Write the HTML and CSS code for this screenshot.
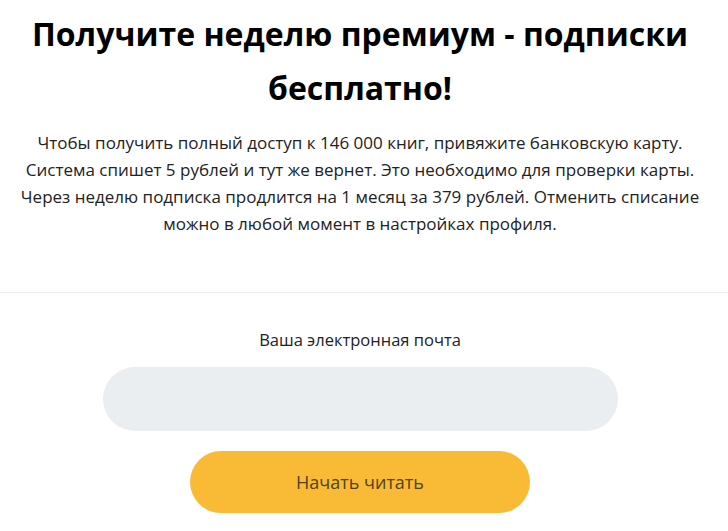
FILE: index.html
```html
<!DOCTYPE html>
<html lang="ru">
<head>
    <meta charset="UTF-8">
    <title>Премиум-подписка</title>
    <link rel="stylesheet" href="styles.css">
</head>
<body>
    <div class="page">
        <div class="promo">
            <h1>Получите неделю премиум - подписки бесплатно!</h1>
            <p class="promo-text">
                Чтобы получить полный доступ к 146 000 книг, привяжите банковскую карту.<br>
                Система спишет 5 рублей и тут же вернет. Это необходимо для проверки карты.<br>
                Через неделю подписка продлится на 1 месяц за 379 рублей. Отменить списание<br>
                можно в любой момент в настройках профиля.
            </p>
        </div>

        <hr class="divider">

        <form class="signup" onsubmit="return false;">
            <label for="email">Ваша электронная почта</label>
            <input type="email" id="email" class="email-input">
            <button type="submit" class="start-btn">Начать читать</button>
        </form>
    </div>
</body>
</html>
```

FILE: styles.css
```css
body {
    margin: 0;
    font-family: 'Open Sans', 'Noto Sans', sans-serif;
    background: #fff;
    color: #222;
}

.page {
    width: 720px;
}

.promo {
    padding: 7px 8px 0;
    text-align: center;
}

h1 {
    margin: 0 auto;
    max-width: 690px;
    font-size: 32px;
    line-height: 54px;
    font-weight: 700;
    color: #000;
}

.promo-text {
    margin: 14px 0 0;
    font-size: 17px;
    line-height: 27px;
    color: #222;
}

.divider {
    margin: 55px -8px 0 0;
    border: none;
    border-top: 1px solid #ececec;
}

.signup {
    display: flex;
    flex-direction: column;
    align-items: center;
    padding-top: 36px;
}

.signup label {
    font-size: 16.5px;
    line-height: 22px;
    color: #222;
}

.email-input {
    margin-top: 16px;
    width: 515px;
    height: 64px;
    box-sizing: border-box;
    border: none;
    border-radius: 32px;
    background: #ebeef1;
    padding: 0 28px;
    font-size: 16px;
    font-family: inherit;
    outline: none;
}

.start-btn {
    margin-top: 20px;
    width: 340px;
    height: 62px;
    border: none;
    border-radius: 31px;
    background: #f9bb35;
    color: #4f4322;
    font-family: inherit;
    font-size: 18px;
    cursor: pointer;
}

.start-btn:hover {
    background: #f5b020;
}
```
